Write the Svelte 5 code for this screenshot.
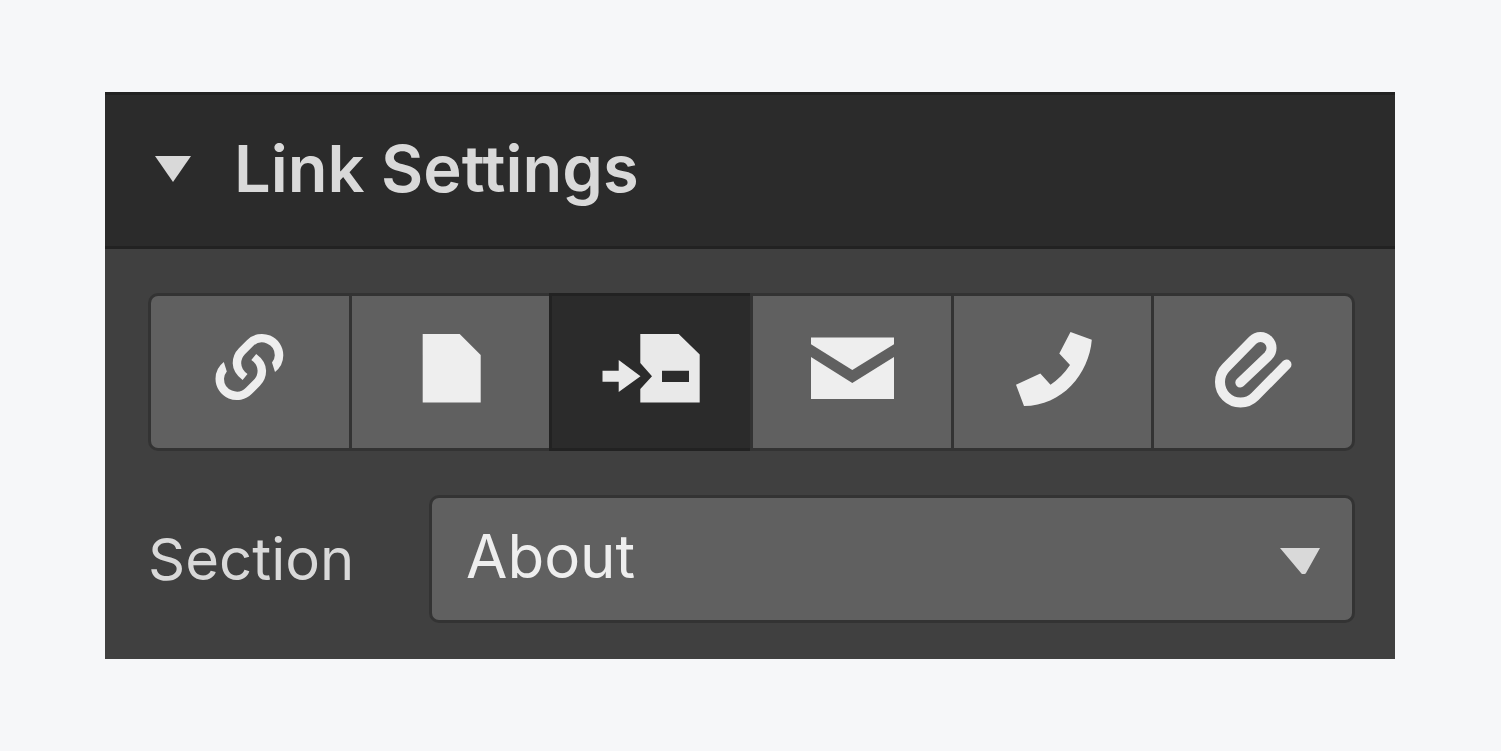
<script lang="ts">
  type LinkType = 'url' | 'page' | 'section' | 'email' | 'phone' | 'file';

  const linkTypes: { id: LinkType; label: string; viewBox: string }[] = [
    { id: 'url', label: 'URL', viewBox: '-5 0 110 104' },
    { id: 'page', label: 'Page', viewBox: '-5 0 110 104' },
    { id: 'section', label: 'Page section', viewBox: '6 0 110 104' },
    { id: 'email', label: 'Email', viewBox: '-3 0 110 104' },
    { id: 'phone', label: 'Phone', viewBox: '-3 0 110 104' },
    { id: 'file', label: 'File', viewBox: '-2 0 110 104' },
  ];

  const linkHalf =
    'M75 52A21.3 21.3 0 0 0 83.3 35.3A21.3 21.3 0 0 0 46.9 20.2L38.9 28.2A21.3 21.3 0 0 0 32.7 43.3Q33 53 42.6 60' +
    'L47.5 53.9Q41.4 50 41.2 43.3A12.8 12.8 0 0 1 44.9 34.2L52.9 26.2A12.8 12.8 0 0 1 74.8 35.3Q74.8 39 72 42.5Z';

  const sections = ['About'];

  let isOpen = $state(true);
  let selectedType = $state<LinkType>('section');
  let selectedSection = $state('About');
</script>

<main class="page">
  <section class="panel">
    <h2 class="heading">
      <button class="header" aria-expanded={isOpen} onclick={() => (isOpen = !isOpen)}>
        <svg class="caret" class:closed={!isOpen} viewBox="0 0 36 26" aria-hidden="true">
          <path d="M0 0H36L18 26Z" />
        </svg>
        <span>Link Settings</span>
      </button>
    </h2>

    {#if isOpen}
      <div class="body">
        <div class="types" role="group" aria-label="Link type">
          {#each linkTypes as type (type.id)}
            <button
              class="type"
              class:active={type.id === selectedType}
              aria-label={type.label}
              aria-pressed={type.id === selectedType}
              onclick={() => (selectedType = type.id)}
            >
              <svg class="icon" viewBox={type.viewBox} aria-hidden="true">
                {#if type.id === 'url'}
                  <path d={linkHalf} />
                  <path d={linkHalf} transform="rotate(180 49.4 47)" />
                {:else if type.id === 'page'}
                  <path d="M22.7 14H59.7L80.7 35V82.5H22.7Z" />
                {:else if type.id === 'section'}
                  <path d="M12.5 50.7H28.7V40L50.5 56.3L28.7 72V61.8H12.5Z" />
                  <path fill-rule="evenodd" d="M50.3 14H88.7L109.7 34.5V82.5H50.3V69L62 56.3L50.3 43ZM72 50.8V62H99V50.8Z" />
                {:else if type.id === 'email'}
                  <path d="M11 17.5H94V24.2L52.3 50L11 24.2Z" />
                  <path d="M11 37L52.3 63L94 37V79H11Z" />
                {:else if type.id === 'phone'}
                  <path d="M70.5 12L91.8 19.7C89 54 62 86 24 86L16 64.7L40.3 53.5L50.5 64.7Q62 57 70 45L59.3 33.5Z" />
                {:else}
                  <path class="line" d="M40.3 62.5L68.3 35.8A11 11 0 0 0 52.7 20.2L26 47.5A20.5 20.5 0 0 0 55 76.5L86.5 44.5" />
                {/if}
              </svg>
            </button>
          {/each}
        </div>

        <div class="field">
          <label for="link-section">Section</label>
          <div class="select-wrap">
            <select id="link-section" bind:value={selectedSection}>
              {#each sections as section}
                <option value={section}>{section}</option>
              {/each}
            </select>
            <svg class="arrow" viewBox="0 0 40 26" aria-hidden="true">
              <path d="M0 0H40L26 25Q25.5 26 24.5 26H22.5Q21.5 26 21 25Z" />
            </svg>
          </div>
        </div>
      </div>
    {/if}
  </section>
</main>

<style>
  :global(body) {
    background: #f6f7f9;
  }

  .page {
    padding: 92px 106px 92px 105px;
    font-family: Inter, 'Liberation Sans', sans-serif;
  }

  .panel {
    background: #404040;
  }

  .heading {
    margin: 0;
  }

  .header {
    display: flex;
    align-items: center;
    gap: 43px;
    width: 100%;
    padding: 34px 50px 38px;
    border: solid #222;
    border-width: 3px 0;
    background: #2b2b2b;
    color: #d9d9d9;
    font-family: inherit;
    font-size: 65px;
    font-weight: 600;
    line-height: 79px;
    text-align: left;
    cursor: pointer;
  }

  .caret {
    width: 36px;
    height: 26px;
    fill: #d9d9d9;
  }

  .caret.closed {
    transform: rotate(-90deg);
  }

  .body {
    display: flex;
    flex-direction: column;
    gap: 44px;
    padding: 44px 40px 36px 43px;
  }

  .types {
    display: grid;
    grid-template-columns: repeat(6, 1fr);
    gap: 3px;
    padding: 3px;
    border-radius: 10px;
    background: #333;
  }

  .type {
    display: flex;
    align-items: center;
    justify-content: center;
    min-width: 0;
    height: 152px;
    padding: 0;
    border: none;
    background: #606060;
    cursor: pointer;
  }

  .type:first-child {
    border-radius: 7px 0 0 7px;
  }

  .type:last-child {
    border-radius: 0 7px 7px 0;
  }

  .type.active {
    height: 158px;
    margin: -3px 0 -3px -3px;
    border: solid #222;
    border-width: 3px 0 3px 3px;
    background: #2b2b2b;
  }

  .icon {
    width: 110px;
    height: 104px;
    fill: #eee;
  }

  .active .icon {
    fill: #e9e9e9;
  }

  .line {
    fill: none;
    stroke: #eee;
    stroke-width: 10;
    stroke-linecap: round;
  }

  .field {
    display: grid;
    grid-template-columns: 281px 1fr;
    align-items: center;
  }

  label {
    color: #d9d9d9;
    font-size: 58px;
    line-height: 72px;
  }

  .select-wrap {
    position: relative;
  }

  select {
    display: block;
    width: 100%;
    height: 128px;
    padding: 0 90px 6px 34px;
    border: 3px solid #333;
    border-radius: 10px;
    appearance: none;
    background: #606060;
    color: #eee;
    font-family: inherit;
    font-size: 60px;
    cursor: pointer;
  }

  .arrow {
    position: absolute;
    top: 53px;
    right: 35px;
    width: 40px;
    height: 26px;
    fill: #d9d9d9;
    pointer-events: none;
  }
</style>
